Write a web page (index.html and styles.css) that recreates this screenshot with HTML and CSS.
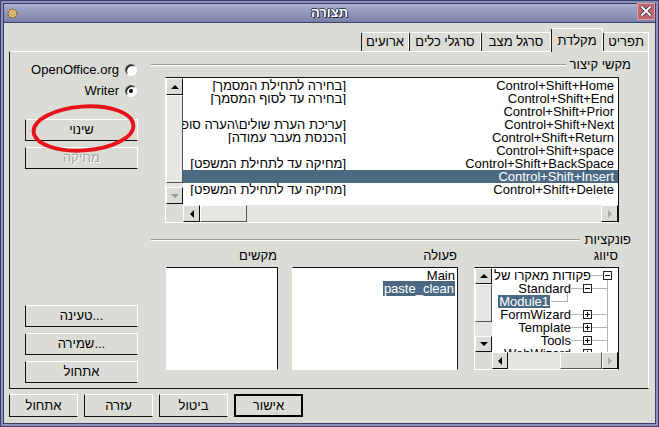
FILE: index.html
```html
<!DOCTYPE html>
<html lang="he">
<head>
<meta charset="utf-8">
<title>תצורה</title>
<link rel="stylesheet" href="styles.css">
</head>
<body>
<div class="window">
  <div class="inner">
    <div class="titlebar">
      <div class="tb-left">
        <svg class="app-icon" width="11" height="11" viewBox="0 0 11 11">
          <circle cx="5.5" cy="5.5" r="4.3" fill="#d6ae5c" stroke="#8a6428" stroke-width="1.4" stroke-dasharray="1.6 1.1"/>
          <circle cx="5.5" cy="5.5" r="3.4" fill="#e2c078"/>
          <circle cx="5.5" cy="5.5" r="1.5" fill="#fff4d8" stroke="#8a6428" stroke-width="0.7"/>
        </svg>
      </div>
      <div class="title">תצורה</div>
      <div class="tb-right">
        <svg class="close" width="18" height="17" viewBox="0 0 18 17">
          <rect x="0.5" y="0.5" width="17" height="16" fill="#c06870" stroke="#e0a0a8"/>
          <path d="M4.5 3.5 L13.5 12.5 M13.5 3.5 L4.5 12.5" stroke="#3c2434" stroke-width="3.6"/>
          <path d="M4.5 3.5 L13.5 12.5 M13.5 3.5 L4.5 12.5" stroke="#ffffff" stroke-width="2"/>
        </svg>
      </div>
    </div>
    <div class="body">
      <div class="tabs">
        <div class="tab tab-events">ארועים</div>
        <div class="tab tab-toolbars">סרגלי כלים</div>
        <div class="tab tab-status">סרגל מצב</div>
        <div class="tab tab-keyboard sel">מקלדת</div>
        <div class="tab tab-menu">תפריט</div>
      </div>
      <div class="panel">
        <div class="leftcol">
          <div class="radio-row"><span>OpenOffice.org</span><span class="radio"></span></div>
          <div class="radio-row second"><span>Writer</span><span class="radio on"></span></div>
          <div class="btn side first">שינוי</div>
          <div class="btn side disabled">מחיקה</div>
          <div class="btngroup">
            <div class="btn side">טעינה...</div>
            <div class="btn side">שמירה...</div>
            <div class="btn side">אתחול</div>
          </div>
          <svg class="ellipse" width="141" height="160" viewBox="0 0 141 160">
            <ellipse cx="73.5" cy="76.5" rx="50" ry="22" fill="none" stroke="#e8121c" stroke-width="3.8" transform="rotate(-4 73.5 76.5)"/>
          </svg>
        </div>
        <div class="rightcol">
          <div class="grouphdr"><div class="gline"></div><div class="glabel">מקשי קיצור</div></div>
          <div class="shortlist sunken">
            <div class="vscroll">
              <div class="sb-btn"><span class="arr up"></span></div>
              <div class="sb-track"><div class="sb-thumb v-thumb-big"></div></div>
              <div class="sb-btn"><span class="arr down dis"></span></div>
              <div class="sb-corner"></div>
            </div>
            <div class="listmain">
              <div class="rows">
                <div class="srow"><div class="fn"><span dir="ltr">[בחירה לתחילת המסמך]</span></div><div class="key">Control+Shift+Home</div></div>
                <div class="srow"><div class="fn"><span dir="ltr">[בחירה עד לסוף המסמך]</span></div><div class="key">Control+Shift+End</div></div>
                <div class="srow"><div class="fn"></div><div class="key">Control+Shift+Prior</div></div>
                <div class="srow"><div class="fn"><span dir="ltr">[עריכת הערת שולים\הערה סופית]</span></div><div class="key">Control+Shift+Next</div></div>
                <div class="srow"><div class="fn"><span dir="ltr">[הכנסת מעבר עמודה]</span></div><div class="key">Control+Shift+Return</div></div>
                <div class="srow"><div class="fn"></div><div class="key">Control+Shift+space</div></div>
                <div class="srow"><div class="fn"><span dir="ltr">[מחיקה עד לתחילת המשפט]</span></div><div class="key">Control+Shift+BackSpace</div></div>
                <div class="srow sel"><div class="fn"></div><div class="key">Control+Shift+Insert</div></div>
                <div class="srow"><div class="fn"><span dir="ltr">[מחיקה עד לתחילת המשפט]</span></div><div class="key">Control+Shift+Delete</div></div>
              </div>
              <div class="hscroll">
                <div class="sb-btn"><span class="arr left"></span></div>
                <div class="sb-thumb h-thumb-a"></div>
                <div class="sb-track"></div>
                <div class="sb-btn"><span class="arr right dis"></span></div>
              </div>
            </div>
          </div>

          <div class="grouphdr second"><div class="gline"></div><div class="glabel">פונקציות</div></div>
          <div class="fcols">
            <div class="fcol col-keys">
              <div class="flabel">מקשים</div>
              <div class="fbox sunken"></div>
            </div>
            <div class="fcol col-action">
              <div class="flabel">פעולה</div>
              <div class="fbox sunken actions">
                <div class="arow">Main</div>
                <div class="arow"><span class="hl">paste_clean</span></div>
              </div>
            </div>
            <div class="fcol col-cat">
              <div class="flabel">סיווג</div>
              <div class="fbox sunken catbox">
                <div class="vscroll small">
                  <div class="sb-btn"><span class="arr up"></span></div>
                  <div class="sb-track"><div class="sb-thumb v-thumb-small"></div></div>
                  <div class="sb-btn"><span class="arr down"></span></div>
                  <div class="sb-corner"></div>
                </div>
                <div class="catmain">
                  <div class="tree">
                    <div class="trow root"><span class="tl">פקודות מאקרו של</span><span class="conn"></span><span class="exp minus"></span></div>
                    <div class="trow lvl1"><span class="tl">Standard</span><span class="conn"></span><span class="exp minus"></span><span class="tail"></span></div>
                    <div class="trow lvl2"><span class="tl hl">Module1</span><span class="elbow"></span></div>
                    <div class="trow lvl1"><span class="tl">FormWizard</span><span class="conn"></span><span class="exp plus"></span><span class="tail"></span></div>
                    <div class="trow lvl1"><span class="tl">Template</span><span class="conn"></span><span class="exp plus"></span><span class="tail"></span></div>
                    <div class="trow lvl1"><span class="tl">Tools</span><span class="conn"></span><span class="exp plus"></span><span class="tail"></span></div>
                    <div class="trow lvl1"><span class="tl">WebWizard</span><span class="conn"></span><span class="exp plus"></span><span class="tail"></span></div>
                  </div>
                  <div class="hscroll small">
                    <div class="sb-btn"><span class="arr left"></span></div>
                    <div class="sb-track"></div>
                    <div class="sb-thumb h-thumb-b"></div>
                    <div class="sb-btn"><span class="arr right dis"></span></div>
                  </div>
                </div>
              </div>
            </div>
          </div>
        </div>
      </div>
      <div class="bottombar">
        <div class="btn bottom">אתחול</div>
        <div class="btn bottom">עזרה</div>
        <div class="btn bottom">ביטול</div>
        <div class="btn bottom default">אישור</div>
      </div>
    </div>
  </div>
</div>
</body>
</html>
```
FILE: styles.css
```css
* { box-sizing: border-box; }
html, body { margin: 0; padding: 0; }
body {
  width: 659px;
  height: 427px;
  overflow: hidden;
  font-family: "Liberation Sans", Arial, "DejaVu Sans", sans-serif;
  font-size: 13px;
  color: #000;
  background: #dcdcd7;
}

.window {
  width: 659px;
  height: 427px;
  background: #8a90b6;
  border: 1px solid #3a406a;
  padding: 2px;
  display: flex;
}
.inner {
  flex: 1;
  border: 1px solid #3a406a;
  display: flex;
  flex-direction: column;
  background: #dcdcd7;
  min-width: 0;
}

/* title bar */
.titlebar {
  height: 19px;
  flex: none;
  border-bottom: 1px solid #3c4270;
  background: linear-gradient(#a9afcd, #7a81aa);
  display: grid;
  grid-template-columns: 1fr auto 1fr;
  align-items: center;
}
.tb-left { display: flex; align-items: center; padding-left: 3px; }
.app-icon { display: block; }
.title {
  color: #fff;
  font-weight: bold;
  font-size: 13px;
  line-height: 18px;
  text-shadow: 1px 1px 0 #20243c, -1px 0 0 #20243c, 0 -1px 0 #3a3f60;
}
.tb-right { display: flex; justify-content: flex-end; align-items: flex-start; align-self: start; margin-top: -1px; }
.close { display: block; }

/* body */
.body {
  flex: 1;
  padding: 6px 6px 6px 5px;
  display: flex;
  flex-direction: column;
  min-height: 0;
}

/* tabs */
.tabs {
  height: 22px;
  flex: none;
  display: flex;
  justify-content: flex-end;
  align-items: flex-end;
}
.tab {
  height: 19px;
  border-top: 1px solid #fff;
  border-right: 1px solid #fff;
  border-left: 1px solid #1a1a1a;
  border-radius: 2px 2px 0 0;
  line-height: 17px;
  text-align: center;
  white-space: nowrap;
  background: #dcdcd7;
}
.tab-events { width: 48px; }
.tab-toolbars { width: 72px; }
.tab-status { width: 70px; }
.tab-keyboard { width: 52px; }
.tab-menu { width: 46px; }
.tab.sel {
  height: 24px;
  margin-bottom: -1px;
  padding-top: 3px;
  position: relative;
  z-index: 2;
}

/* panel */
.panel {
  height: 338px;
  flex: none;
  border-top: 1px solid #fff;
  border-right: 1px solid #fff;
  border-left: 1px solid #1a1a1a;
  border-bottom: 1px solid #1a1a1a;
  display: flex;
  position: relative;
}

/* left column */
.leftcol {
  width: 141px;
  flex: none;
  padding: 10px 13px 5px 15px;
  display: flex;
  flex-direction: column;
  position: relative;
}
.radio-row {
  height: 16px;
  display: flex;
  justify-content: flex-end;
  align-items: center;
  gap: 6px;
  padding-right: 1px;
  line-height: 16px;
}
.radio-row.second { margin-top: 5px; }
.radio {
  width: 12px;
  height: 12px;
  border-radius: 50%;
  border: 1px solid;
  border-color: #555 #fff #fff #555;
  background: #fff;
  box-shadow: inset 1px 1px 0 #000;
  display: flex;
  align-items: center;
  justify-content: center;
}
.radio.on::before {
  content: "";
  width: 4px;
  height: 4px;
  border-radius: 50%;
  background: #000;
}

.btn {
  height: 22px;
  background: #dcdcd7;
  border-top: 1px solid #fff;
  border-right: 1px solid #fff;
  border-left: 1px solid #111;
  border-bottom: 1px solid #111;
  display: flex;
  align-items: center;
  justify-content: center;
  white-space: nowrap;
  line-height: 16px;
}
.btn.first { margin-top: 20px; }
.btn.disabled {
  margin-top: 6px;
  color: #a3a39f;
  text-shadow: 1px 1px 0 #fff;
}
.btngroup {
  margin-top: auto;
  display: flex;
  flex-direction: column;
  gap: 6px;
}
.ellipse {
  position: absolute;
  left: 0;
  top: 0;
  pointer-events: none;
}

/* right column */
.rightcol {
  flex: 1;
  min-width: 0;
  padding: 6px 29px 0 14px;
  display: flex;
  flex-direction: column;
}
.grouphdr {
  height: 14px;
  flex: none;
  display: flex;
  align-items: center;
  margin: 0 -12px 0 -14px;
}
.grouphdr.second { margin-top: 10px; }
.gline {
  flex: 1;
  height: 2px;
  border-top: 1px solid #9d9d99;
  border-bottom: 1px solid #fff;
  margin-right: 4px;
}
.glabel { line-height: 14px; white-space: nowrap; }

.sunken {
  background: #fff;
  border-top: 1px solid #111;
  border-right: 1px solid #111;
  border-left: 1px solid #fff;
  border-bottom: 1px solid #fff;
}

.shortlist {
  margin-top: 5px;
  height: 146px;
  flex: none;
  display: flex;
  overflow: hidden;
}

/* scrollbars */
.vscroll {
  width: 17px;
  flex: none;
  display: flex;
  flex-direction: column;
  background: #e4e4e0;
}
.sb-btn {
  width: 17px;
  height: 17px;
  flex: none;
  background: #dcdcd7;
  border-top: 1px solid #fff;
  border-left: 1px solid #fff;
  border-right: 1px solid #111;
  border-bottom: 1px solid #111;
  display: flex;
  align-items: center;
  justify-content: center;
}
.small .sb-btn { width: 16px; height: 16px; }
.vscroll.small { width: 17px; }
.vscroll.small .sb-btn { width: 17px; }
.sb-track {
  flex: 1;
  background: #e4e4e0;
}
.sb-thumb {
  background: #e6e6e2;
  border-top: 1px solid #fff;
  border-left: 1px solid #fff;
  border-right: 1px solid #555;
  border-bottom: 1px solid #555;
}
.v-thumb-big { height: 88px; }
.v-thumb-small { height: 38px; }
.h-thumb-a { width: 47px; flex: none; }
.h-thumb-b { width: 42px; flex: none; background: #dcdcd7; }
.sb-corner {
  height: 18px;
  flex: none;
  background: #dcdcd7;
}
.vscroll.small .sb-corner { height: 17px; }

.arr { width: 0; height: 0; border: 4px solid transparent; }
.arr.up { border-top-width: 0; border-bottom-color: #000; }
.arr.down { border-bottom-width: 0; border-top-color: #000; }
.arr.left { border-left-width: 0; border-right-color: #000; }
.arr.right { border-right-width: 0; border-left-color: #000; }
.arr.down.dis { border-top-color: #9a9a96; }
.arr.right.dis { border-left-color: #a8a8a4; }

.hscroll {
  height: 17px;
  flex: none;
  display: flex;
  background: #e4e4e0;
}
.hscroll .sb-btn { height: 17px; }
.hscroll.small .sb-btn { width: 16px; height: 17px; }

.listmain {
  flex: 1;
  min-width: 0;
  display: flex;
  flex-direction: column;
}
.rows {
  flex: 1;
  padding-top: 1px;
  overflow: hidden;
  background: #fff;
}
.srow {
  height: 13px;
  line-height: 13px;
  display: flex;
  white-space: nowrap;
}
.srow.sel { background: #4b6983; color: #fff; }
.fn {
  flex: 1;
  min-width: 0;
  overflow: hidden;
  direction: rtl;
  text-align: right;
}
.key {
  width: 272px;
  flex: none;
  padding-right: 4px;
  text-align: right;
}

/* functions area */
.fcols {
  margin-top: 2px;
  margin-left: 1px;
  display: flex;
  gap: 14px;
}
.fcol { display: flex; flex-direction: column; }
.col-keys { width: 112px; }
.col-action { width: 166px; }
.col-cat { width: 145px; margin-left: 2px; }
.flabel {
  height: 14px;
  line-height: 14px;
  text-align: right;
  padding-right: 1px;
}
.fbox {
  margin-top: 4px;
  height: 103px;
}
.actions { padding: 1px 2px 0 0; }
.arow {
  height: 13px;
  line-height: 13px;
  text-align: right;
  white-space: nowrap;
}
.hl { background: #4b6983; color: #fff; padding: 0 1px; }

.catbox { display: flex; overflow: hidden; }
.catmain {
  flex: 1;
  min-width: 0;
  display: flex;
  flex-direction: column;
}
.tree {
  flex: 1;
  min-height: 0;
  overflow: hidden;
  padding-top: 1px;
  position: relative;
}
.tree::before {
  content: "";
  position: absolute;
  right: 10px;
  top: 12px;
  bottom: 0;
  border-left: 1px solid #b4b4b0;
}
.trow {
  height: 13px;
  line-height: 13px;
  display: flex;
  justify-content: flex-end;
  align-items: center;
  white-space: nowrap;
  position: relative;
}
.trow > span { flex: none; }
.trow.root { padding-right: 6px; }
.trow.lvl1 { padding-right: 11px; }
.trow.lvl2 { padding-right: 50px; }
.trow.lvl2 .tl { padding: 0 1px; }
.conn {
  width: 12px;
  height: 1px;
  background: #b4b4b0;
}
.tail {
  width: 15px;
  height: 1px;
  background: #b4b4b0;
}
.elbow {
  width: 17px;
  height: 9px;
  margin-left: 1px;
  align-self: flex-start;
  margin-top: -2px;
  border-right: 1px solid #b4b4b0;
  border-bottom: 1px solid #b4b4b0;
}
.exp {
  width: 9px;
  height: 9px;
  border: 1px solid #222;
  background: #fff;
  position: relative;
}
.exp::before {
  content: "";
  position: absolute;
  left: 1px;
  top: 3px;
  width: 5px;
  height: 1px;
  background: #000;
}
.exp.plus::after {
  content: "";
  position: absolute;
  left: 3px;
  top: 1px;
  width: 1px;
  height: 5px;
  background: #000;
}

/* bottom buttons */
.bottombar {
  margin-top: 5px;
  height: 23px;
  flex: none;
  display: flex;
  gap: 6px;
}
.btn.bottom { width: 69px; height: 23px; }
.btn.default { border: 2px solid #000; }
```
